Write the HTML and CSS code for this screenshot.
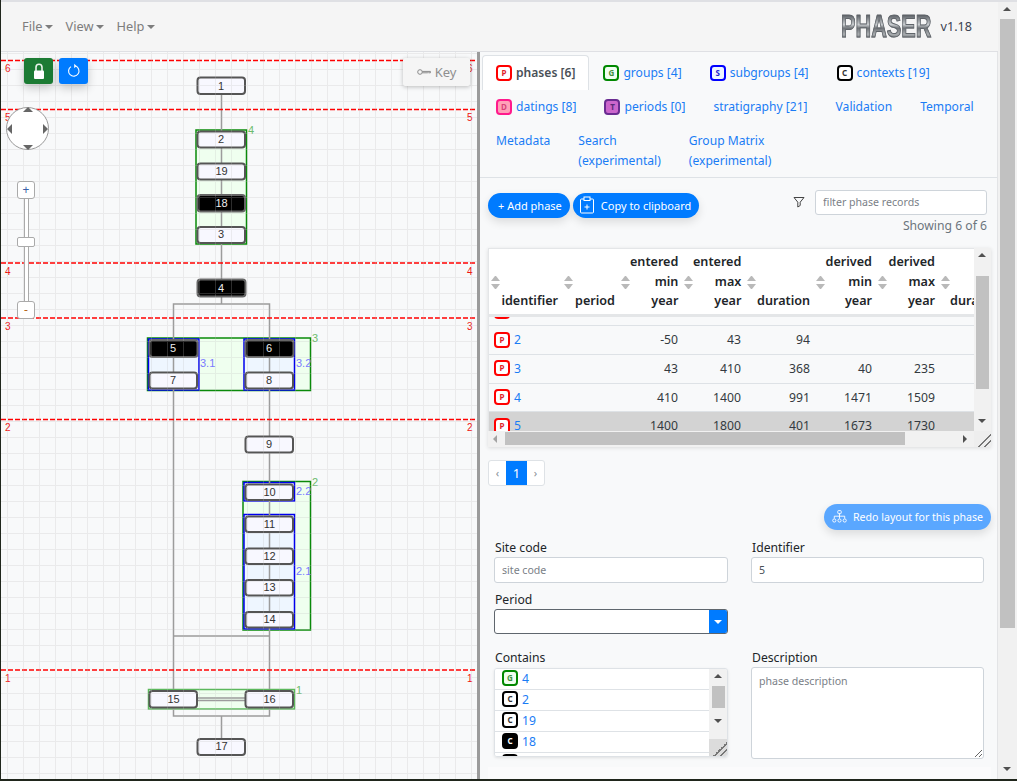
FILE: index.html
```html
<!DOCTYPE html>
<html lang="en">
<head>
    <meta charset="UTF-8">
    <meta name="viewport" content="width=device-width, initial-scale=1.0">
    <title>Phaser</title>
    <link rel="stylesheet" href="styles.css">
</head>
<body>
    <div class="window">
        <div class="app">
            <nav class="navbar">
                <div class="menu">
                    <a href="#" class="menu-item">File</a>
                    <a href="#" class="menu-item">View</a>
                    <a href="#" class="menu-item">Help</a>
                </div>
                <div class="brand">
                    <div class="logo"><span>PHASER</span></div>
                    <span class="version">v1.18</span>
                </div>
            </nav>

            <div class="split">
                <div class="graph-pane">
                    <svg class="graph" width="476" height="727" viewBox="1 52 476 727" xmlns="http://www.w3.org/2000/svg">
                        <defs>
                            <pattern id="grid" x="7" y="5" width="16" height="16" patternUnits="userSpaceOnUse">
                                <path d="M0 0V16M0 0H16" class="grid-line"></path>
                            </pattern>
                        </defs>

                        <!-- groups and subgroups -->
                        <rect class="group" x="196" y="130" width="50.5" height="114"></rect>
                        <rect class="group" x="147.5" y="338" width="163" height="52.5"></rect>
                        <rect class="group" x="243" y="481.5" width="67.5" height="148.5"></rect>
                        <rect class="group group-soft" x="148.5" y="689.5" width="146" height="19.5"></rect>
                        <rect class="subgroup" x="148.5" y="339" width="50.5" height="51"></rect>
                        <rect class="subgroup" x="244" y="339" width="50.5" height="51"></rect>
                        <rect class="subgroup" x="244" y="482.5" width="50.5" height="18.5"></rect>
                        <rect class="subgroup" x="244" y="514.5" width="50.5" height="114.5"></rect>

                        <!-- edges -->
                        <path class="edge" d="M221.5 94V279M221.5 297V304M173.5 339V304H269.5V339"></path>
                        <path class="edge" d="M173.5 357V689M269.5 357V436M269.5 453V689M173.5 636H269.5"></path>
                        <path class="edge" d="M198 698H245M198 700.5H245"></path>
                        <path class="edge" d="M173.5 708V716H269.5V708M221.5 716V739"></path>

                        <!-- level lines -->
                        <path class="level" d="M1 60.5H477M1 109.5H477M1 263H477M1 318H477M1 419.5H477M1 670H477"></path>
                        <text class="level-label" x="5" y="72">6</text>
                        <text class="level-label" x="467" y="72">6</text>
                        <text class="level-label" x="5" y="121">5</text>
                        <text class="level-label" x="467" y="121">5</text>
                        <text class="level-label" x="5" y="275">4</text>
                        <text class="level-label" x="467" y="275">4</text>
                        <text class="level-label" x="5" y="330">3</text>
                        <text class="level-label" x="467" y="330">3</text>
                        <text class="level-label" x="5" y="431">2</text>
                        <text class="level-label" x="467" y="431">2</text>
                        <text class="level-label" x="5" y="682">1</text>
                        <text class="level-label" x="467" y="682">1</text>

                        <!-- contexts -->
                        <rect class="node" x="197.5" y="77.5" width="47.5" height="16.5" rx="3"></rect>
                        <text class="node-text" x="221" y="89.5">1</text>
                        <rect class="node" x="197.5" y="131.5" width="47.5" height="16" rx="3"></rect>
                        <text class="node-text" x="221" y="142.5">2</text>
                        <rect class="node" x="197.5" y="163.5" width="47.5" height="16" rx="3"></rect>
                        <text class="node-text" x="221.5" y="174.5">19</text>
                        <rect class="node node-black" x="197.5" y="195" width="47.5" height="16.5" rx="3"></rect>
                        <text class="node-text node-text-white" x="221.5" y="206.5">18</text>
                        <rect class="node" x="197.5" y="227" width="47.5" height="16" rx="3"></rect>
                        <text class="node-text" x="221" y="238">3</text>
                        <rect class="node node-black" x="197.5" y="279.5" width="48" height="17" rx="3"></rect>
                        <text class="node-text node-text-white" x="221" y="291.5">4</text>
                        <rect class="node node-black" x="149.5" y="340" width="48" height="17" rx="3"></rect>
                        <text class="node-text node-text-white" x="173" y="351.5">5</text>
                        <rect class="node node-black" x="245.5" y="340" width="48" height="17" rx="3"></rect>
                        <text class="node-text node-text-white" x="269" y="351.5">6</text>
                        <rect class="node" x="149.5" y="372.5" width="47.5" height="16" rx="3"></rect>
                        <text class="node-text" x="173" y="383.5">7</text>
                        <rect class="node" x="245.5" y="372.5" width="47.5" height="16" rx="3"></rect>
                        <text class="node-text" x="269" y="383.5">8</text>
                        <rect class="node" x="245.5" y="436.5" width="47.5" height="16" rx="3"></rect>
                        <text class="node-text" x="269" y="447.5">9</text>
                        <rect class="node" x="245.5" y="484.5" width="47.5" height="15.5" rx="3"></rect>
                        <text class="node-text" x="269.5" y="495.5">10</text>
                        <rect class="node" x="245.5" y="516.5" width="47.5" height="15.5" rx="3"></rect>
                        <text class="node-text" x="269.5" y="527.5">11</text>
                        <rect class="node" x="245.5" y="548.5" width="47.5" height="15.5" rx="3"></rect>
                        <text class="node-text" x="269.5" y="559.5">12</text>
                        <rect class="node" x="245.5" y="580" width="47.5" height="15.5" rx="3"></rect>
                        <text class="node-text" x="269.5" y="591">13</text>
                        <rect class="node" x="245.5" y="612" width="47.5" height="15.5" rx="3"></rect>
                        <text class="node-text" x="269.5" y="623">14</text>
                        <rect class="node" x="149.5" y="691" width="47.5" height="16.5" rx="3"></rect>
                        <text class="node-text" x="173.5" y="702.5">15</text>
                        <rect class="node" x="245.5" y="691" width="47.5" height="16.5" rx="3"></rect>
                        <text class="node-text" x="269.5" y="702.5">16</text>
                        <rect class="node" x="197.5" y="739" width="47.5" height="16" rx="3"></rect>
                        <text class="node-text" x="221.5" y="750">17</text>

                        <!-- group labels -->
                        <text class="group-label" x="248" y="134">4</text>
                        <text class="group-label" x="312" y="342">3</text>
                        <text class="group-label" x="312" y="486">2</text>
                        <text class="group-label" x="296" y="694">1</text>
                        <text class="subgroup-label" x="200" y="367">3.1</text>
                        <text class="subgroup-label" x="296" y="367">3.2</text>
                        <text class="subgroup-label" x="296" y="495">2.2</text>
                        <text class="subgroup-label" x="296" y="575">2.1</text>

                        <rect class="grid-cover" x="1" y="52" width="476" height="727" fill="url(#grid)"></rect>
                    </svg>

                    <div class="graph-buttons">
                        <button class="square-btn square-btn-green" type="button">
                            <svg width="16" height="18" viewBox="0 0 16 18" xmlns="http://www.w3.org/2000/svg">
                                <path d="M5 9V5.2a3 3 0 0 1 6 0V9" fill="none" stroke="#e9f2ea" stroke-width="1.6"></path>
                                <rect x="3" y="8.5" width="10" height="8.5" rx="1" fill="#fff"></rect>
                            </svg>
                        </button>
                        <button class="square-btn square-btn-blue" type="button">
                            <svg width="16" height="16" viewBox="0 0 16 16" xmlns="http://www.w3.org/2000/svg">
                                <path d="M9.5 3.1A5.2 5.2 0 1 1 5 3.6" fill="none" stroke="#fff" stroke-width="1.1"></path>
                                <path d="M8.2 0.8V5.2L10.6 3z" fill="#fff"></path>
                            </svg>
                        </button>
                    </div>

                    <button class="key-btn" type="button">
                        <svg width="14" height="8" viewBox="0 0 14 8" xmlns="http://www.w3.org/2000/svg">
                            <circle cx="3" cy="4" r="2.3" fill="none" stroke="#8a8a8a" stroke-width="1"></circle>
                            <path d="M5.3 3.4H13.4V4.8H11.5L11 4.3L10.4 4.8H5.3" fill="none" stroke="#8a8a8a" stroke-width="1"></path>
                        </svg>
                        Key
                    </button>

                    <div class="nav-controls">
                        <div class="compass">
                            <span class="pan pan-up"></span>
                            <span class="pan pan-down"></span>
                            <span class="pan pan-left"></span>
                            <span class="pan pan-right"></span>
                        </div>
                        <div class="zoom-slider">
                            <span class="zoom-btn">+</span>
                            <span class="zoom-track zoom-track-short"></span>
                            <span class="zoom-handle"></span>
                            <span class="zoom-track"></span>
                            <span class="zoom-btn zoom-btn-minus">-</span>
                        </div>
                    </div>
                </div>

                <div class="pane-divider"></div>

                <div class="side-pane">
                    <ul class="nav-tabs">
                        <li class="tab active"><span class="tag tag-phase">P</span>phases [6]</li>
                        <li class="tab"><span class="tag tag-group">G</span>groups [4]</li>
                        <li class="tab"><span class="tag tag-subgroup">S</span>subgroups [4]</li>
                        <li class="tab"><span class="tag tag-context">C</span>contexts [19]</li>
                        <li class="tab"><span class="tag tag-dating">D</span>datings [8]</li>
                        <li class="tab"><span class="tag tag-period">T</span>periods [0]</li>
                        <li class="tab">stratigraphy [21]</li>
                        <li class="tab">Validation</li>
                        <li class="tab">Temporal</li>
                        <li class="tab">Metadata</li>
                        <li class="tab">Search<br>(experimental)</li>
                        <li class="tab">Group Matrix<br>(experimental)</li>
                    </ul>

                    <div class="side-content">
                        <div class="toolbar">
                            <button class="pill-btn" type="button">+ Add phase</button>
                            <button class="pill-btn pill-btn-icon" type="button">
                                <svg width="16" height="18" viewBox="0 0 16 18" xmlns="http://www.w3.org/2000/svg">
                                    <path d="M5 3H2.5a1 1 0 0 0-1 1v12a1 1 0 0 0 1 1h11a1 1 0 0 0 1-1V4a1 1 0 0 0-1-1H11" fill="none" stroke="#fff"></path>
                                    <rect x="5" y="1" width="6" height="3.5" fill="none" stroke="#fff"></rect>
                                    <path d="M8 8.5v5M5.5 11h5" fill="none" stroke="#fff"></path>
                                </svg>
                                Copy to clipboard
                            </button>
                            <div class="filter">
                                <svg width="12" height="12" viewBox="0 0 12 12" xmlns="http://www.w3.org/2000/svg">
                                    <path d="M1 1.5H11L7.2 6.2V9.5L4.8 11V6.2z" fill="none" stroke="#444"></path>
                                </svg>
                                <input class="form-input filter-input" type="text" placeholder="filter phase records">
                            </div>
                        </div>
                        <div class="showing">Showing 6 of 6</div>

                        <div class="table-frame">
                            <div class="table-view">
                                <table class="data-table table-head">
                                    <colgroup>
                                        <col class="col-id"><col class="col-period"><col class="col-year"><col class="col-year">
                                        <col class="col-duration"><col class="col-derived"><col class="col-year"><col class="col-last">
                                    </colgroup>
                                    <thead>
                                        <tr>
                                            <th><div class="th-cell"><span class="sort"></span><span class="th-text">identifier</span></div></th>
                                            <th><div class="th-cell"><span class="sort"></span><span class="th-text">period</span></div></th>
                                            <th><div class="th-cell"><span class="sort"></span><span class="th-text">entered<br>min<br>year</span></div></th>
                                            <th><div class="th-cell"><span class="sort"></span><span class="th-text">entered<br>max<br>year</span></div></th>
                                            <th><div class="th-cell"><span class="sort"></span><span class="th-text">duration</span></div></th>
                                            <th><div class="th-cell"><span class="sort"></span><span class="th-text">derived<br>min<br>year</span></div></th>
                                            <th><div class="th-cell"><span class="sort"></span><span class="th-text">derived<br>max<br>year</span></div></th>
                                            <th><div class="th-cell"><span class="sort"></span><span class="th-text">duration</span></div></th>
                                        </tr>
                                    </thead>
                                </table>
                                <div class="table-body">
                                    <table class="data-table">
                                        <colgroup>
                                            <col class="col-id"><col class="col-period"><col class="col-year"><col class="col-year">
                                            <col class="col-duration"><col class="col-derived"><col class="col-year"><col class="col-last">
                                        </colgroup>
                                        <tbody>
                                            <tr>
                                                <td><span class="tag tag-phase">P</span><a href="#">1</a></td>
                                                <td></td><td></td><td></td><td></td><td></td><td></td><td></td>
                                            </tr>
                                            <tr>
                                                <td><span class="tag tag-phase">P</span><a href="#">2</a></td>
                                                <td></td><td>-50</td><td>43</td><td>94</td><td></td><td></td><td></td>
                                            </tr>
                                            <tr>
                                                <td><span class="tag tag-phase">P</span><a href="#">3</a></td>
                                                <td></td><td>43</td><td>410</td><td>368</td><td>40</td><td>235</td><td></td>
                                            </tr>
                                            <tr>
                                                <td><span class="tag tag-phase">P</span><a href="#">4</a></td>
                                                <td></td><td>410</td><td>1400</td><td>991</td><td>1471</td><td>1509</td><td></td>
                                            </tr>
                                            <tr class="selected">
                                                <td><span class="tag tag-phase">P</span><a href="#">5</a></td>
                                                <td></td><td>1400</td><td>1800</td><td>401</td><td>1673</td><td>1730</td><td></td>
                                            </tr>
                                        </tbody>
                                    </table>
                                </div>
                            </div>
                            <div class="vbar">
                                <span class="arrow arrow-up"></span>
                                <span class="vbar-thumb"></span>
                                <span class="arrow arrow-down"></span>
                            </div>
                            <div class="hbar">
                                <span class="arrow arrow-left"></span>
                                <span class="hbar-thumb"></span>
                                <span class="arrow arrow-right"></span>
                            </div>
                            <div class="grip"></div>
                        </div>

                        <div class="pagination">
                            <span class="page-link">‹</span>
                            <span class="page-link current">1</span>
                            <span class="page-link">›</span>
                        </div>

                        <div class="redo-row">
                            <button class="pill-btn pill-btn-faded" type="button">
                                <svg width="15" height="13" viewBox="0 0 15 13" xmlns="http://www.w3.org/2000/svg">
                                    <g fill="none" stroke="#fff" stroke-width="0.9">
                                        <rect x="5.8" y="0.6" width="3.4" height="3" rx="0.6"></rect>
                                        <path d="M7.5 3.6V8.5M2.3 8.5V6.2H12.7V8.5"></path>
                                        <circle cx="2.3" cy="10.5" r="1.6"></circle>
                                        <circle cx="7.5" cy="10.5" r="1.6"></circle>
                                        <circle cx="12.7" cy="10.5" r="1.6"></circle>
                                    </g>
                                </svg>
                                Redo layout for this phase
                            </button>
                        </div>

                        <form class="phase-form">
                            <div class="form-group">
                                <label class="form-label" for="site-code">Site code</label>
                                <input class="form-input" id="site-code" type="text" placeholder="site code">
                            </div>
                            <div class="form-group">
                                <label class="form-label" for="identifier">Identifier</label>
                                <input class="form-input" id="identifier" type="text" value="5">
                            </div>
                            <div class="form-group form-group-period">
                                <span class="form-label">Period</span>
                                <div class="select-box"><span class="select-arrow"></span></div>
                            </div>
                            <div class="form-group form-group-empty"></div>
                            <div class="form-group">
                                <span class="form-label">Contains</span>
                                <div class="list-box">
                                    <ul class="list-items">
                                        <li><span class="tag tag-group">G</span><a href="#">4</a></li>
                                        <li><span class="tag tag-context">C</span><a href="#">2</a></li>
                                        <li><span class="tag tag-context">C</span><a href="#">19</a></li>
                                        <li><span class="tag tag-context-black">C</span><a href="#">18</a></li>
                                        <li><span class="tag tag-context-black">C</span><a href="#">3</a></li>
                                    </ul>
                                    <div class="list-bar">
                                        <span class="arrow arrow-up"></span>
                                        <span class="list-thumb"></span>
                                        <span class="arrow arrow-down"></span>
                                        <span class="list-grip"></span>
                                    </div>
                                </div>
                            </div>
                            <div class="form-group">
                                <label class="form-label" for="description">Description</label>
                                <textarea class="form-input description" id="description" placeholder="phase description"></textarea>
                            </div>
                        </form>

                        <div class="next-card"></div>
                    </div>
                </div>
            </div>
        </div>

        <div class="page-bar">
            <span class="arrow arrow-up"></span>
            <span class="page-thumb"></span>
            <span class="arrow arrow-down"></span>
        </div>
    </div>
</body>
</html>
```

FILE: styles.css
```css
* {
    box-sizing: border-box;
}

body {
    margin: 0;
    height: 781px;
    overflow: hidden;
    background-color: #20261c;
    font-family: "Noto Sans", Arial, sans-serif;
    font-size: 12.2px;
    line-height: 19.5px;
    color: #212529;
}

a {
    color: #1a7cf5;
    text-decoration: none;
}

.window {
    display: flex;
    height: 779px;
    margin-left: 1px;
    border-top: 2px solid #dfe0e4;
    background-color: #f8f9fa;
}

.app {
    flex: 1;
    min-width: 0;
    display: flex;
    flex-direction: column;
}

/* navbar */
.navbar {
    height: 50px;
    flex-shrink: 0;
    display: flex;
    justify-content: space-between;
    align-items: center;
    padding: 0 26px 0 21px;
    background-color: #f5f5f5;
    border-bottom: 1px solid #dfe0e4;
}

.menu {
    display: flex;
    gap: 12px;
}

.menu-item {
    font-size: 12.8px;
    color: #7d7d7d;
}

.menu-item::after {
    content: "";
    display: inline-block;
    margin-left: 3px;
    vertical-align: 2px;
    border-top: 4px solid #7d7d7d;
    border-left: 4px solid transparent;
    border-right: 4px solid transparent;
}

.brand {
    display: flex;
    align-items: center;
    gap: 9px;
}

.logo {
    width: 91px;
    height: 24px;
    line-height: 24px;
    font-family: "Liberation Sans", Arial, sans-serif;
    font-size: 31px;
    font-weight: 700;
}

.logo span {
    display: inline-block;
    transform: scaleX(0.7);
    transform-origin: left center;
    background: linear-gradient(#5a5f64, #c9cdd0 40%, #6f7377 55%, #a9adb0 80%, #6d7074);
    -webkit-background-clip: text;
    background-clip: text;
    color: transparent;
    -webkit-text-stroke: 1px #60656a;
}

.version {
    font-size: 12.6px;
    color: #3a4250;
}

.split {
    flex: 1;
    min-height: 0;
    display: flex;
}

/* graph */
.graph-pane {
    position: relative;
    width: 476px;
    overflow: hidden;
}

.pane-divider {
    width: 3px;
    background-color: #9b9b9b;
}

.graph {
    display: block;
    font-family: "Liberation Sans", Arial, sans-serif;
}

.grid-line {
    fill: none;
    stroke: rgba(190, 190, 190, 0.24);
    stroke-width: 2;
}

.group {
    fill: #efffef;
    stroke: #0a8a0a;
    stroke-width: 1.5;
}

.group-soft {
    stroke: #5cb85c;
}

.subgroup {
    fill: #eef6ff;
    stroke: #0000ee;
    stroke-width: 1.5;
}

.edge {
    fill: none;
    stroke: #9c9c9c;
    stroke-width: 1.5;
}

.level {
    fill: none;
    stroke: #f00;
    stroke-width: 1.5;
    stroke-dasharray: 5 2;
}

.level-label {
    font-size: 10px;
    fill: #f01010;
}

.node {
    fill: #f8f8ff;
    stroke: #555;
    stroke-width: 2;
}

.node-black {
    fill: #000;
    stroke: #666;
}

.node-text {
    font-size: 11px;
    text-anchor: middle;
    fill: #333;
}

.node-text-white {
    fill: #eee;
}

.group-label {
    font-size: 11px;
    fill: #6cbb6c;
}

.subgroup-label {
    font-size: 11px;
    fill: #7a7aff;
}

.graph-buttons {
    position: absolute;
    top: 6px;
    left: 23px;
    display: flex;
    gap: 6px;
}

.square-btn {
    width: 29px;
    height: 26px;
    display: flex;
    align-items: center;
    justify-content: center;
    padding: 0;
    border: none;
    border-radius: 3px;
    box-shadow: 0 4px 10px rgba(0, 0, 0, 0.2);
}

.square-btn-green {
    background-color: #1c7b34;
}

.square-btn-blue {
    background-color: #007bff;
}

.key-btn {
    position: absolute;
    top: 6px;
    left: 402px;
    width: 67px;
    height: 28px;
    display: flex;
    align-items: center;
    justify-content: center;
    gap: 4px;
    padding: 0;
    border: none;
    border-radius: 2px;
    background-color: #f5f5f5;
    box-shadow: 0 1px 4px rgba(0, 0, 0, 0.25);
    font-family: inherit;
    font-size: 13px;
    color: #8f8f8f;
}

.nav-controls {
    position: absolute;
    top: 55px;
    left: 4px;
    width: 44px;
    display: flex;
    flex-direction: column;
    align-items: center;
    gap: 31px;
}

.compass {
    position: relative;
    width: 43px;
    height: 43px;
    border-radius: 50%;
    border: 1px solid #999;
    background-color: #fff;
}

.pan {
    position: absolute;
    width: 0;
    height: 0;
    border: 5px solid transparent;
}

.pan-up {
    top: -1px;
    left: 16px;
    border-top: none;
    border-bottom-color: #666;
}

.pan-down {
    bottom: -1px;
    left: 16px;
    border-bottom: none;
    border-top-color: #666;
}

.pan-left {
    top: 16px;
    left: 0;
    border-left: none;
    border-right-color: #666;
}

.pan-right {
    top: 16px;
    right: 0;
    border-right: none;
    border-left-color: #666;
}

.zoom-slider {
    display: flex;
    flex-direction: column;
    align-items: center;
    margin-left: -2px;
}

.zoom-btn {
    width: 18px;
    height: 18px;
    border: 1px solid #aaa;
    border-radius: 3px;
    background-color: #fff;
    text-align: center;
    line-height: 15px;
    font-size: 12px;
    color: #3a5fa8;
}

.zoom-btn-minus {
    color: #b5651d;
}

.zoom-track {
    width: 5px;
    height: 54px;
    border-left: 1px solid #aaa;
    border-right: 1px solid #aaa;
    background-color: #fff;
}

.zoom-track-short {
    height: 38px;
}

.zoom-handle {
    width: 18px;
    height: 10px;
    border: 1px solid #aaa;
    border-radius: 2px;
    background-color: #fff;
}

/* right pane */
.side-pane {
    flex: 1;
    min-width: 0;
    overflow: hidden;
    border-right: 1px solid #e3e4e6;
}

.nav-tabs {
    display: flex;
    flex-wrap: wrap;
    margin: 0;
    padding: 3px 0 0 2px;
    list-style: none;
    border-bottom: 1px solid #dee2e6;
    color: #1a7cf5;
}

.tab {
    padding: 8px 14px 6.5px;
    font-size: 12.1px;
}

.tab.active {
    margin-bottom: -1px;
    background-color: #fff;
    border: 1px solid #dee2e6;
    border-bottom: none;
    border-radius: 4px 4px 0 0;
    padding: 7px 13px 6.5px;
    font-weight: 600;
    color: #495057;
}

.tag {
    display: inline-block;
    width: 16px;
    height: 16px;
    margin-right: 4px;
    overflow: hidden;
    border: 2px solid;
    border-radius: 4px;
    vertical-align: -3.5px;
    text-align: center;
    line-height: 12px;
    font-size: 8px;
    font-weight: 700;
}

.tag-phase {
    border-color: #f00;
    background-color: #fff;
    color: #e0202a;
}

.tag-group {
    border-color: #080;
    background-color: #f0fff0;
    color: #3f8f3f;
}

.tag-subgroup {
    border-color: #00f;
    background-color: #eef6ff;
    color: #2020d0;
}

.tag-context {
    border-color: #000;
    background-color: #fff;
    color: #333;
}

.tag-context-black {
    border-color: #000;
    background-color: #000;
    color: #fff;
}

.tag-dating {
    border-color: #ff1a8c;
    background-color: #ffa0b8;
    color: #d8407a;
}

.tag-period {
    border-color: #6a2c91;
    background-color: #cc66cc;
    color: #5a2a7a;
}

.side-content {
    padding: 12px 6px 0 8px;
}

.toolbar {
    display: flex;
    align-items: flex-start;
    gap: 3px;
    margin-right: 4px;
}

.pill-btn {
    height: 25px;
    display: inline-flex;
    align-items: center;
    gap: 6px;
    padding: 0 8px 0 10px;
    border: none;
    border-radius: 13px;
    background-color: #007bff;
    box-shadow: 0 4px 10px rgba(0, 0, 0, 0.12);
    font-family: inherit;
    font-size: 11px;
    color: #fff;
}

.pill-btn-icon {
    padding-left: 6px;
}

.toolbar .pill-btn {
    margin-top: 3px;
}

.pill-btn-faded {
    height: 26px;
    padding-left: 8px;
    background-color: #5aa7ff;
    font-size: 10.6px;
}

.filter {
    margin-left: auto;
    display: flex;
    align-items: center;
    gap: 10px;
}

.form-input {
    display: block;
    width: 100%;
    height: 26px;
    padding: 0 7px;
    border: 1px solid #ced4da;
    border-radius: 3px;
    background-color: #fff;
    font-family: inherit;
    font-size: 10.6px;
    color: #495057;
}

.form-input::placeholder {
    color: #7a8087;
    opacity: 1;
}

.filter-input {
    width: 172px;
    height: 25px;
}

.showing {
    margin: -2px 4px 12.5px 0;
    text-align: right;
    color: #6c757d;
}

/* table */
.table-frame {
    display: grid;
    grid-template-columns: 486px 17px;
    grid-template-rows: 183px 16px;
    box-shadow: 0 1px 4px rgba(0, 0, 0, 0.12);
}

.table-view {
    overflow: hidden;
    border-top: 1px solid #e4e6e8;
    border-left: 1px solid #e4e6e8;
}

.data-table {
    width: 518px;
    table-layout: fixed;
    border-collapse: collapse;
}

.col-id { width: 73px; }
.col-period { width: 57px; }
.col-year { width: 63px; }
.col-duration { width: 69px; }
.col-derived { width: 62px; }
.col-last { width: 68px; }

.table-head {
    background-color: #fff;
}

.table-head th {
    height: 67px;
    padding: 0 4px 0 2px;
    border-bottom: 3px solid #e4e6e8;
    vertical-align: top;
}

.th-cell {
    display: flex;
    align-items: center;
    height: 64px;
    padding-top: 4px;
}

.th-text {
    flex: 1;
    align-self: flex-end;
    padding-bottom: 2px;
    text-align: right;
    font-size: 12.6px;
    font-weight: 600;
    white-space: nowrap;
}

.sort {
    flex-shrink: 0;
    width: 9px;
    height: 13px;
    display: flex;
    flex-direction: column;
    justify-content: space-between;
}

.sort::before,
.sort::after {
    content: "";
    border-left: 4.5px solid transparent;
    border-right: 4.5px solid transparent;
}

.sort::before {
    border-bottom: 5.5px solid #b9b9b9;
}

.sort::after {
    border-top: 5.5px solid #b9b9b9;
}

.table-body {
    height: 115px;
    overflow: hidden;
}

.table-body .data-table {
    margin-top: -20px;
}

.table-body td {
    height: 28.7px;
    padding: 0 4px;
    border-bottom: 1px solid #dee2e6;
    text-align: right;
    color: #343a40;
}

.table-body td:first-child {
    padding-left: 5px;
    text-align: left;
}

.table-body .selected td {
    background-color: #d3d3d3;
}

.vbar {
    display: flex;
    flex-direction: column;
    align-items: center;
    background-color: #f1f1f1;
}

.vbar-thumb {
    width: 13px;
    height: 113px;
    margin: 11px 0 24px;
    background-color: #c1c1c1;
}

.hbar {
    display: flex;
    align-items: center;
    background-color: #f1f1f1;
}

.hbar-thumb {
    width: 400px;
    height: 13px;
    background-color: #c1c1c1;
    margin-right: 52px;
}

.grip {
    background:
        linear-gradient(135deg, transparent 60%, #777 60%, #777 66%, transparent 66%, transparent 78%, #777 78%, #777 84%, transparent 84%),
        #eee;
}

.arrow {
    flex-shrink: 0;
    width: 17px;
    height: 17px;
    display: block;
    position: relative;
}

.arrow::after {
    content: "";
    position: absolute;
    top: 5px;
    left: 4px;
    border: 4px solid transparent;
}

.arrow-up::after {
    border-top: none;
    border-bottom-color: #505050;
}

.arrow-down::after {
    top: 6px;
    border-bottom: none;
    border-top-color: #505050;
}

.arrow-left::after {
    left: 5px;
    border-left: none;
    border-right-color: #a3a3a3;
}

.arrow-right::after {
    left: 6px;
    border-right: none;
    border-left-color: #505050;
}

.pagination {
    display: inline-flex;
    margin-top: 13px;
    border: 1px solid #dee2e6;
    border-radius: 3px;
    background-color: #fff;
    vertical-align: top;
}

.page-link {
    width: 17px;
    height: 24px;
    text-align: center;
    line-height: 24px;
    font-size: 11px;
    color: #868e96;
}

.page-link.current {
    width: 21px;
    background-color: #007bff;
    font-size: 13px;
    color: #fff;
}

.redo-row {
    display: flex;
    justify-content: flex-end;
    margin-top: 18px;
}

/* form */
.phase-form {
    display: grid;
    grid-template-columns: 234px 233px;
    column-gap: 23px;
    row-gap: 8px;
    margin: 9px 0 0 6px;
}

.form-label {
    display: block;
    height: 18px;
    line-height: 18px;
    padding-left: 1px;
}

.form-group-empty {
    min-height: 1px;
}

.select-box {
    position: relative;
    height: 25px;
    border: 1px solid #5f666d;
    border-radius: 3px;
    background-color: #fff;
    overflow: hidden;
}

.select-arrow {
    position: absolute;
    top: 0;
    right: 0;
    width: 18px;
    height: 100%;
    background-color: #007bff;
}

.select-arrow::after {
    content: "";
    position: absolute;
    top: 10px;
    left: 5px;
    border-top: 4px solid #fff;
    border-left: 4px solid transparent;
    border-right: 4px solid transparent;
}

.form-group-period {
    margin-bottom: 7px;
}

.list-box {
    display: flex;
    height: 89px;
    margin-top: 1px;
    border: 1px solid #dee2e6;
    border-radius: 3px;
    overflow: hidden;
    box-shadow: 0 1px 3px rgba(0, 0, 0, 0.1);
}

.list-items {
    flex: 1;
    margin: 0;
    padding: 0;
    list-style: none;
    background-color: #fff;
}

.list-items li {
    height: 21px;
    padding-left: 7px;
    border-bottom: 1px solid #dee2e6;
    line-height: 20px;
}

.list-bar {
    position: relative;
    width: 18px;
    display: flex;
    flex-direction: column;
    align-items: center;
    background-color: #f1f1f1;
}

.list-thumb {
    width: 13px;
    height: 22px;
    margin-bottom: 5px;
    background-color: #c1c1c1;
}

.list-grip {
    position: absolute;
    right: 0;
    bottom: 0;
    width: 18px;
    height: 17px;
    background:
        linear-gradient(135deg, transparent 60%, #777 60%, #777 66%, transparent 66%, transparent 78%, #777 78%, #777 84%, transparent 84%),
        #dcdcdc;
}

.description {
    height: 92px;
    padding: 5px 7px;
    line-height: 16px;
}

.next-card {
    height: 60px;
    margin-top: 8px;
    background-color: #fbfbfc;
}

/* page scrollbar */
.page-bar {
    width: 19px;
    flex-shrink: 0;
    display: flex;
    flex-direction: column;
    align-items: center;
    background-color: #f1f1f1;
    overflow: hidden;
}

.page-thumb {
    width: 15px;
    height: 609px;
    margin-bottom: 133px;
    background-color: #c1c1c1;
}
```
